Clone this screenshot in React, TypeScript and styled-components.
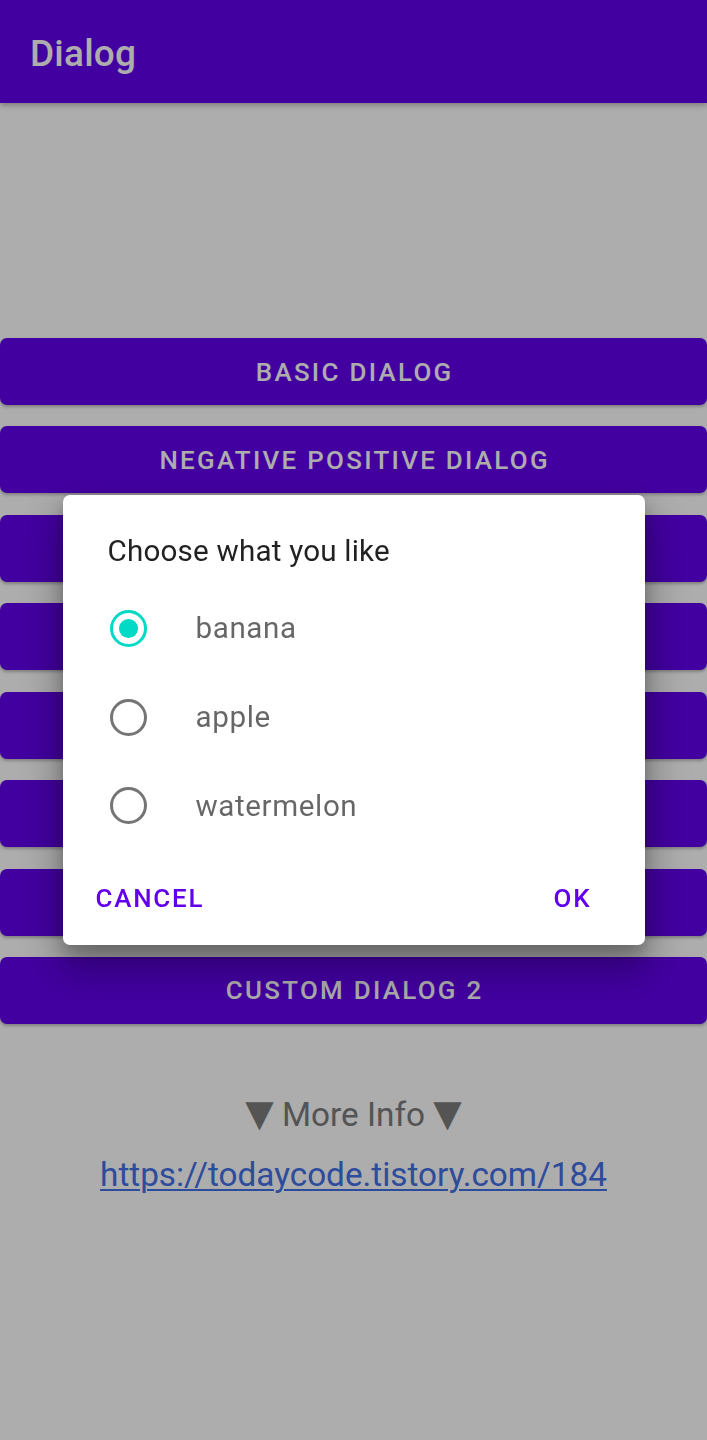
import React from "react";
import styled, { createGlobalStyle } from "styled-components";

const GlobalStyle = createGlobalStyle`
  html, body {
    margin: 0;
    padding: 0;
    background: #ffffff;
  }
  body {
    font-family: Roboto, "Noto Sans", "Liberation Sans", sans-serif;
    -webkit-font-smoothing: antialiased;
  }
  * { box-sizing: border-box; }
`;

const Screen = styled.div`
  width: 707px;
  min-height: 1440px;
  background: #ffffff;
  display: flex;
  flex-direction: column;
`;

const AppBar = styled.header`
  height: 103px;
  background: #6200ee;
  display: flex;
  align-items: center;
  padding: 4px 0 0 30px;
  box-shadow: 0 2px 6px rgba(0, 0, 0, 0.3);
  position: relative;
  z-index: 1;
`;

const AppTitle = styled.h1`
  margin: 0;
  font-family: Roboto, sans-serif;
  font-weight: 500;
  font-size: 37px;
  color: #ffffff;
  letter-spacing: 0.2px;
`;

const Content = styled.main`
  display: flex;
  flex-direction: column;
  align-items: stretch;
  padding-top: 235px;
`;

const ButtonList = styled.div`
  display: flex;
  flex-direction: column;
  gap: 21.43px;
`;

const ActionButton = styled.button`
  height: 67px;
  width: 100%;
  border: none;
  border-radius: 7px;
  background: #6200ee;
  color: #ffffff;
  font-family: Roboto, sans-serif;
  font-weight: 500;
  font-size: 25.9px;
  letter-spacing: 2.3px;
  text-transform: uppercase;
  box-shadow: 0 2px 3px rgba(0, 0, 0, 0.25);
  display: flex;
  align-items: center;
  justify-content: center;
  padding: 0 0 0 2.3px;
`;

const MoreInfo = styled.p`
  margin: 70px 0 0;
  text-align: center;
  font-family: Roboto, sans-serif;
  font-size: 33.3px;
  line-height: 39px;
  color: #7c7c7c;
`;

const Tri = styled.span`
  font-family: "DejaVu Sans", sans-serif;
  font-size: 37px;
`;

const InfoLink = styled.a`
  margin-top: 21px;
  align-self: center;
  font-family: Roboto, sans-serif;
  font-size: 33.3px;
  line-height: 39px;
  color: #4470e6;
  text-decoration: underline;
  text-underline-offset: 3px;
  text-decoration-thickness: 2px;
`;

const Scrim = styled.div`
  position: fixed;
  inset: 0;
  background: rgba(0, 0, 0, 0.32);
  display: flex;
  align-items: center;
  justify-content: center;
  z-index: 10;
`;

const DialogCard = styled.div`
  width: 582px;
  background: #ffffff;
  border-radius: 7px;
  padding: 36px 0 13px;
  display: flex;
  flex-direction: column;
  box-shadow: 0 20px 42px 6px rgba(0, 0, 0, 0.3), 0 8px 16px rgba(0, 0, 0, 0.2);
`;

const DialogTitle = styled.h2`
  margin: 0 0 12.6px;
  padding-left: 45px;
  font-family: Roboto, sans-serif;
  font-weight: 400;
  font-size: 29.6px;
  line-height: 40px;
  color: rgba(0, 0, 0, 0.87);
  letter-spacing: 0.2px;
`;

const OptionList = styled.div`
  display: flex;
  flex-direction: column;
`;

const OptionRow = styled.label`
  height: 88.8px;
  display: flex;
  align-items: center;
  padding-left: 47.5px;
  gap: 48.5px;
`;

const Radio = styled.span<{ $checked: boolean }>`
  width: 37px;
  height: 37px;
  flex: none;
  border-radius: 50%;
  border: 3.7px solid ${(p) => (p.$checked ? "#03dac5" : "#757575")};
  display: flex;
  align-items: center;
  justify-content: center;
  &::after {
    content: "";
    width: 18.5px;
    height: 18.5px;
    border-radius: 50%;
    background: #03dac5;
    display: ${(p) => (p.$checked ? "block" : "none")};
  }
`;

const OptionText = styled.span`
  font-family: Roboto, sans-serif;
  font-size: 29.6px;
  color: rgba(0, 0, 0, 0.6);
  letter-spacing: 0.6px;
`;

const ButtonBar = styled.div`
  margin-top: 14.7px;
  display: flex;
  justify-content: space-between;
  padding: 0 13px 0 18px;
`;

const TextButton = styled.button`
  height: 66.6px;
  min-width: 118px;
  padding: 0 15px;
  border: none;
  background: transparent;
  color: #6200ee;
  font-family: Roboto, sans-serif;
  font-weight: 500;
  font-size: 25.9px;
  letter-spacing: 1.8px;
  text-transform: uppercase;
  display: flex;
  align-items: center;
  justify-content: center;
`;

// Labels of the buttons hidden behind the dialog are not visible in the screen.
const buttons = [
  { id: "basic", label: "Basic Dialog" },
  { id: "negpos", label: "Negative Positive Dialog" },
  { id: "b3", label: "" },
  { id: "b4", label: "" },
  { id: "b5", label: "" },
  { id: "b6", label: "" },
  { id: "b7", label: "" },
  { id: "custom2", label: "Custom Dialog 2" },
];

const options = [
  { label: "banana", checked: true },
  { label: "apple", checked: false },
  { label: "watermelon", checked: false },
];

export default function App() {
  return (
    <>
      <GlobalStyle />
      <Screen>
        <AppBar>
          <AppTitle>Dialog</AppTitle>
        </AppBar>
        <Content>
          <ButtonList>
            {buttons.map((b) => (
              <ActionButton key={b.id}>{b.label}</ActionButton>
            ))}
          </ButtonList>
          <MoreInfo>
            <Tri>▼</Tri> More Info <Tri>▼</Tri>
          </MoreInfo>
          <InfoLink href="#">https://todaycode.tistory.com/184</InfoLink>
        </Content>
      </Screen>
      <Scrim>
        <DialogCard>
          <DialogTitle>Choose what you like</DialogTitle>
          <OptionList>
            {options.map((o) => (
              <OptionRow key={o.label}>
                <Radio $checked={o.checked} />
                <OptionText>{o.label}</OptionText>
              </OptionRow>
            ))}
          </OptionList>
          <ButtonBar>
            <TextButton>Cancel</TextButton>
            <TextButton>OK</TextButton>
          </ButtonBar>
        </DialogCard>
      </Scrim>
    </>
  );
}
